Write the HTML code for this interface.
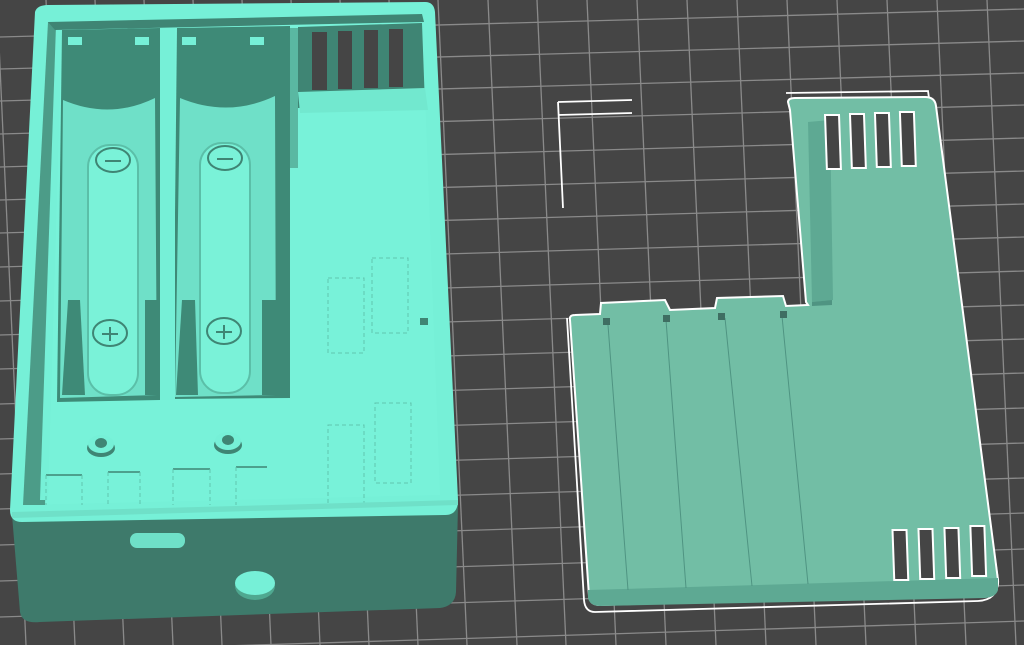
<!DOCTYPE html>
<html><head><style>html,body{margin:0;padding:0;background:#454545;width:1024px;height:645px;overflow:hidden}</style></head>
<body>
<svg width="1024" height="645" viewBox="0 0 1024 645" xmlns="http://www.w3.org/2000/svg">
<rect width="1024" height="645" fill="#454545"/>
<g stroke="#8a8a8a" stroke-width="1.3">
<line x1="-52" y1="0" x2="-23" y2="645"/>
<line x1="-3" y1="0" x2="26" y2="645"/>
<line x1="46" y1="0" x2="75" y2="645"/>
<line x1="95" y1="0" x2="124" y2="645"/>
<line x1="144" y1="0" x2="173" y2="645"/>
<line x1="193" y1="0" x2="222" y2="645"/>
<line x1="242" y1="0" x2="271" y2="645"/>
<line x1="291" y1="0" x2="320" y2="645"/>
<line x1="340" y1="0" x2="369" y2="645"/>
<line x1="389" y1="0" x2="418" y2="645"/>
<line x1="438" y1="0" x2="467" y2="645"/>
<line x1="488" y1="0" x2="517" y2="645"/>
<line x1="537" y1="0" x2="566" y2="645"/>
<line x1="587" y1="0" x2="616" y2="645"/>
<line x1="637" y1="0" x2="666" y2="645"/>
<line x1="687" y1="0" x2="716" y2="645"/>
<line x1="737" y1="0" x2="766" y2="645"/>
<line x1="787" y1="0" x2="816" y2="645"/>
<line x1="837" y1="0" x2="866" y2="645"/>
<line x1="887" y1="0" x2="916" y2="645"/>
<line x1="937" y1="0" x2="966" y2="645"/>
<line x1="987" y1="0" x2="1016" y2="645"/>
<line x1="1037" y1="0" x2="1066" y2="645"/>
<line x1="0" y1="37" x2="1024" y2="9"/>
<line x1="0" y1="69" x2="1024" y2="41"/>
<line x1="0" y1="101" x2="1024" y2="73"/>
<line x1="0" y1="134" x2="1024" y2="105"/>
<line x1="0" y1="167" x2="1024" y2="138"/>
<line x1="0" y1="200" x2="1024" y2="171"/>
<line x1="0" y1="233" x2="1024" y2="204"/>
<line x1="0" y1="267" x2="1024" y2="237"/>
<line x1="0" y1="301" x2="1024" y2="271"/>
<line x1="0" y1="335" x2="1024" y2="305"/>
<line x1="0" y1="369" x2="1024" y2="339"/>
<line x1="0" y1="404" x2="1024" y2="373"/>
<line x1="0" y1="439" x2="1024" y2="408"/>
<line x1="0" y1="474" x2="1024" y2="443"/>
<line x1="0" y1="509" x2="1024" y2="478"/>
<line x1="0" y1="545" x2="1024" y2="513"/>
<line x1="0" y1="581" x2="1024" y2="549"/>
<line x1="0" y1="617" x2="1024" y2="585"/>
<line x1="0" y1="653" x2="1024" y2="621"/>
</g>

<path d="M12 515 L20 612 Q22 624 40 622 L440 608 Q455 606 456 592 L458 505 Z" fill="#3e7a6b"/>
<path d="M35 12 Q37 5 48 5 L425 2 Q434 2 435 12 L458 500 Q458 515 445 515 L22 522 Q10 522 10 510 Z" fill="#76f0d7"/>
<path d="M48 22 L422 14 L440 495 L23 505 Z" fill="#78f2d9"/>
<path d="M48 22 L60 22 L45 505 L23 505 Z" fill="#4c9c88"/>
<path d="M56 25 L62 25 L48 500 L40 500 Z" fill="#76f0d7"/>
<path d="M48 22 L422 14 L424 22 L55 30 Z" fill="#3f8574"/>
<path d="M62 30 L160 28 L160 400 L57 402 Z" fill="#3e8a77"/>
<path d="M177 28 L290 26 L290 398 L173 399 Z" fill="#3e8a77"/>
<path d="M63 100 Q110 120 155 98 L157 395 L60 398 Z" fill="#6fe0c8"/>
<path d="M180 98 Q228 118 275 96 L276 395 L175 397 Z" fill="#6fe0c8"/>
<path d="M68 300 L80 300 L85 395 L62 395 Z" fill="#3e8a77"/>
<path d="M145 300 L157 300 L157 395 L145 395 Z" fill="#3e8a77"/>
<path d="M182 300 L195 300 L198 395 L176 395 Z" fill="#3e8a77"/>
<path d="M262 300 L276 300 L276 395 L262 395 Z" fill="#3e8a77"/>
<rect x="88" y="145" width="50" height="250" rx="22" fill="#7af2d8" stroke="#5bbfa8" stroke-width="2"/>
<rect x="200" y="143" width="50" height="250" rx="22" fill="#7af2d8" stroke="#5bbfa8" stroke-width="2"/>
<ellipse cx="113" cy="160" rx="17" ry="12" fill="none" stroke="#3f8574" stroke-width="2"/>
<line x1="105" y1="161" x2="121" y2="161" stroke="#3f8574" stroke-width="2"/>
<ellipse cx="225" cy="158" rx="17" ry="12" fill="none" stroke="#3f8574" stroke-width="2"/>
<line x1="217" y1="159" x2="233" y2="159" stroke="#3f8574" stroke-width="2"/>
<ellipse cx="110" cy="333" rx="17" ry="13" fill="none" stroke="#3f8574" stroke-width="2"/>
<path d="M102 334 H118 M110 327 V341" stroke="#3f8574" stroke-width="2"/>
<ellipse cx="224" cy="331" rx="17" ry="13" fill="none" stroke="#3f8574" stroke-width="2"/>
<path d="M216 332 H232 M224 325 V339" stroke="#3f8574" stroke-width="2"/>
<rect x="68" y="37" width="14" height="8" fill="#76f0d7"/>
<rect x="135" y="37" width="14" height="8" fill="#76f0d7"/>
<rect x="182" y="37" width="14" height="8" fill="#76f0d7"/>
<rect x="250" y="37" width="14" height="8" fill="#76f0d7"/>
<rect x="160" y="28" width="15" height="372" fill="#76f0d7"/>
<rect x="290" y="28" width="8" height="140" fill="#5ab8a2"/>
<path d="M298 27 L422 23 L425 105 L298 108 Z" fill="#3f8574"/>
<path d="M298 92 L425 88 L428 110 L300 113 Z" fill="#72e8cf"/>
<rect x="312" y="32" width="15" height="58" fill="#454545"/>
<rect x="338" y="31" width="14" height="58" fill="#454545"/>
<rect x="364" y="30" width="14" height="58" fill="#454545"/>
<rect x="389" y="29" width="14" height="58" fill="#454545"/>
<rect x="420" y="318" width="8" height="7" fill="#3f8574"/>
<ellipse cx="101" cy="448" rx="14" ry="9" fill="#3f8574"/><ellipse cx="101" cy="444" rx="13" ry="9" fill="#76f0d7"/><ellipse cx="101" cy="443" rx="6" ry="5" fill="#3f8574"/>
<ellipse cx="228" cy="445" rx="14" ry="9" fill="#3f8574"/><ellipse cx="228" cy="441" rx="13" ry="9" fill="#76f0d7"/><ellipse cx="228" cy="440" rx="6" ry="5" fill="#3f8574"/>
<path d="M46 475 H82 M108 472 H140 M173 469 H210 M236 467 H267" stroke="#3f8574" stroke-width="1.5" fill="none"/>
<g stroke="#5fc5ae" stroke-width="1" fill="none" stroke-dasharray="4 3">
<path d="M46 475 V505 M82 475 V505 M108 472 V505 M140 472 V505 M173 469 V505 M210 469 V505 M236 467 V505"/>
<rect x="328" y="425" width="36" height="80"/><rect x="375" y="403" width="36" height="80"/>
<rect x="328" y="278" width="36" height="75"/><rect x="372" y="258" width="36" height="75"/>
</g>
<path d="M12 512 L458 500 L458 505 L12 518 Z" fill="#6fe0c8"/>
<rect x="130" y="533" width="55" height="15" rx="7" fill="#6fe0c8"/>
<ellipse cx="255" cy="586" rx="20" ry="14" fill="#4fa890"/>
<ellipse cx="255" cy="583" rx="20" ry="12" fill="#76f0d7"/>

<g fill="none" stroke="#ffffff" stroke-width="1.8">
<path d="M558 102 L632 100 M558 115 L632 113 M558 102 L563 208"/>
<path d="M786 93 L928 91 L998 580 Q998 600 978 601 L595 612 Q585 612 584 600 L567 318"/>
</g>
<path d="M788 102 Q788 98 795 98 L925 97 Q935 97 936 106 L998 580 Q999 592 988 593 L600 605 Q590 605 589 596 L570 320 Q569 315 575 315 L600 314 L601 303 L665 300 L670 310 L715 308 L717 298 L783 296 L786 306 L808 305 L806 302 L790 110 Z" fill="#72bea5" stroke="#ffffff" stroke-width="2"/>
<path d="M808 122 L830 120 L833 300 L812 302 Z" fill="#5ea993"/>
<path d="M812 302 L832 300 L832 305 L812 306 Z" fill="#4f9482"/>
<path d="M588 590 L998 578 L998 590 Q996 597 985 598 L600 606 Q590 606 588 598 Z" fill="#5ea993"/>
<g fill="#454545" stroke="#ffffff" stroke-width="2">
<rect x="821" y="115" width="14" height="54" transform="skewX(2)"/>
<rect x="846" y="114" width="14" height="54" transform="skewX(2)"/>
<rect x="871" y="113" width="14" height="54" transform="skewX(2)"/>
<rect x="896" y="112" width="14" height="54" transform="skewX(2)"/>
<rect x="874" y="530" width="14" height="50" transform="skewX(2)"/>
<rect x="900" y="529" width="14" height="50" transform="skewX(2)"/>
<rect x="926" y="528" width="14" height="50" transform="skewX(2)"/>
<rect x="952" y="526" width="14" height="50" transform="skewX(2)"/>
</g>
<path d="M608 325 L628 590 M666 320 L686 588 M725 318 L752 586 M782 316 L808 584" stroke="#4f9482" stroke-width="1" fill="none"/>
<rect x="603" y="318" width="7" height="7" fill="#3f6e62"/>
<rect x="663" y="315" width="7" height="7" fill="#3f6e62"/>
<rect x="718" y="313" width="7" height="7" fill="#3f6e62"/>
<rect x="780" y="311" width="7" height="7" fill="#3f6e62"/>
</svg>
</body></html>
